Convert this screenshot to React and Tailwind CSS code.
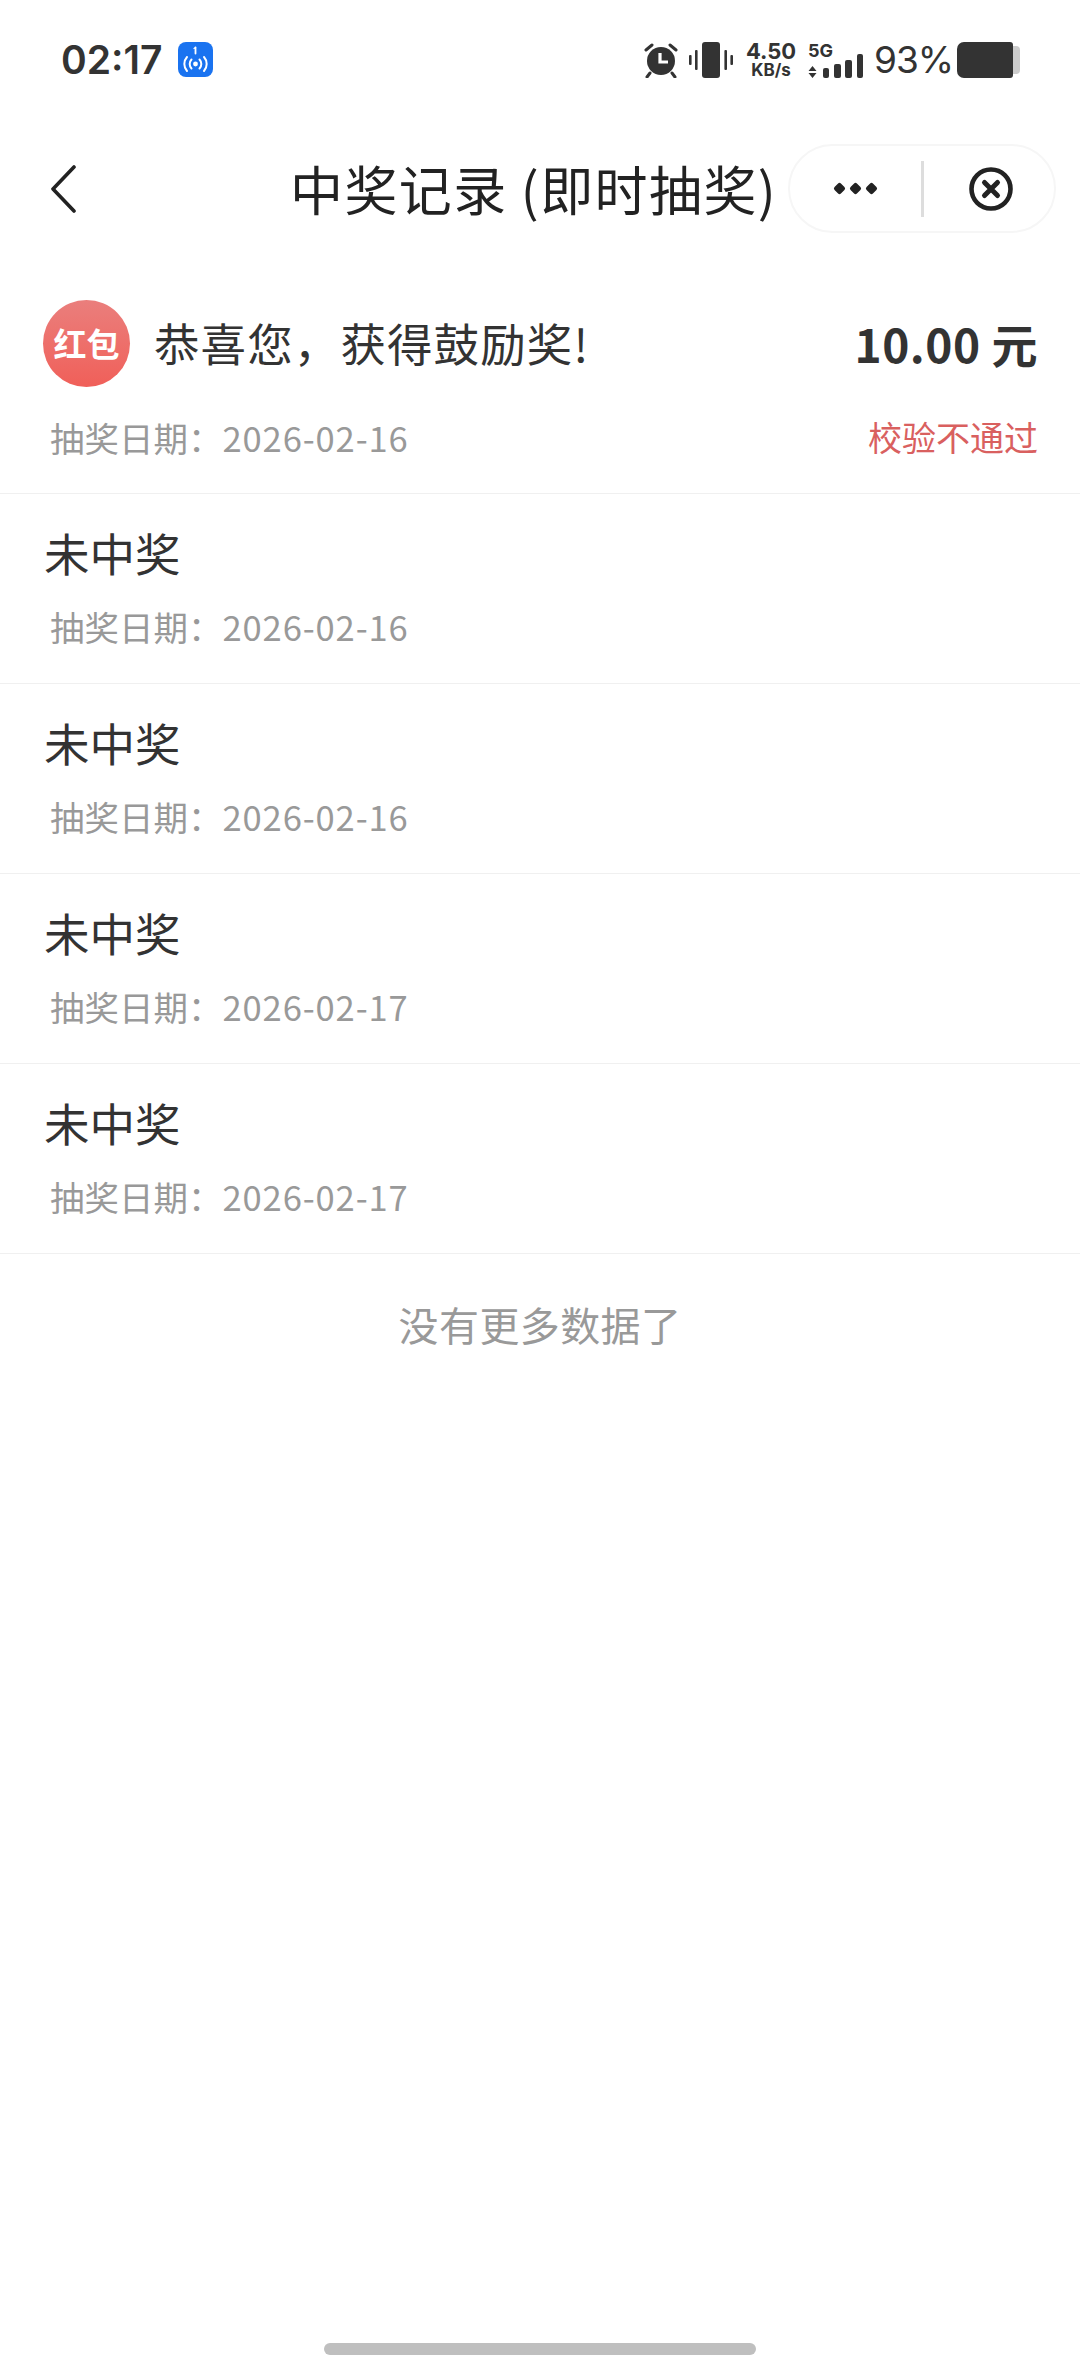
import React from "react";

const records = [
  { date: "2026-02-16" },
  { date: "2026-02-16" },
  { date: "2026-02-17" },
  { date: "2026-02-17" },
];

const cjk = "font-['Noto_Sans_CJK_SC','Noto_Sans',sans-serif]";

const HotspotBadge = () => (
  <div className="w-[35px] h-[35px] ml-[16px] rounded-[8px] bg-[#1a73f0] flex items-center justify-center">
    <svg width="35" height="35" viewBox="0 0 35 35" fill="none" stroke="#fff" strokeWidth="2" strokeLinecap="round">
      <path d="M17.5 5.5v6" strokeWidth="1.8" />
      <path d="M16 6.5l1.5-1" strokeWidth="1.2" />
      <circle cx="17.5" cy="22" r="2.4" fill="#fff" stroke="none" />
      <path d="M13.5 17.5a6.5 6.5 0 0 0 0 9" />
      <path d="M21.5 17.5a6.5 6.5 0 0 1 0 9" />
      <path d="M9 15a10.5 10.5 0 0 0 0 14" />
      <path d="M26 15a10.5 10.5 0 0 1 0 14" />
    </svg>
  </div>
);

const AlarmIcon = () => (
  <svg width="36" height="36" viewBox="0 0 36 36" fill="none">
    <circle cx="18" cy="19" r="14" fill="#333" />
    <path d="M3 8l6-5M33 8l-6-5M7 31l-3 4M29 31l3 4" stroke="#333" strokeWidth="3" strokeLinecap="round" />
    <path d="M17 11v9h8" stroke="#fff" strokeWidth="3.2" fill="none" />
  </svg>
);

const VibrateIcon = () => (
  <svg width="44" height="36" viewBox="0 0 44 36" fill="#333">
    <rect x="13" y="0" width="18" height="36" rx="3" />
    <rect x="0" y="13" width="2.6" height="10" rx="1" />
    <rect x="6" y="8" width="2.6" height="20" rx="1" />
    <rect x="35.4" y="8" width="2.6" height="20" rx="1" />
    <rect x="41.4" y="13" width="2.6" height="10" rx="1" />
  </svg>
);

const SignalIcon = () => (
  <svg width="55" height="36" viewBox="0 0 55 36" fill="#333">
    <path d="M4.5 12l4 5H.5zM4.5 24l-4-5h8z" />
    <rect x="15" y="14" width="6" height="10" rx="2" />
    <rect x="26" y="10" width="7" height="14" rx="2" />
    <rect x="37" y="6" width="7" height="18" rx="2" />
    <rect x="49" y="0" width="6" height="24" rx="2" />
  </svg>
);

const StatusBar = () => (
  <div className="h-[120px] pl-[61px] pr-[60px] pt-[42px] flex justify-between items-start text-[#333]">
    <div className="flex items-center h-[35px]">
      <span className="font-['Inter',sans-serif] font-semibold text-[39px] leading-none">02:17</span>
      <HotspotBadge />
    </div>
    <div className="flex items-start h-[36px]">
      <AlarmIcon />
      <div className="ml-[10px]"><VibrateIcon /></div>
      <div className="ml-[15px] w-[46px] flex flex-col items-center font-['Inter',sans-serif] font-bold leading-none">
        <span className="text-[22px] leading-[18px]">4.50</span>
        <span className="text-[17px] leading-[18px] mt-[1px]">KB/s</span>
      </div>
      <div className="ml-[14px] w-[55px] relative h-[36px]">
        <span className="absolute left-0 top-[1px] font-['Inter',sans-serif] font-bold text-[18px] leading-[15px]">5G</span>
        <div className="absolute left-0 top-[12px]"><SignalIcon /></div>
      </div>
      <span className="ml-[11px] w-[74px] font-['Inter',sans-serif] text-[37px] leading-[36px] tracking-[-1px] whitespace-nowrap">93%</span>
      <div className="ml-[9px] flex items-center h-[36px]">
        <div className="w-[56px] h-[36px] bg-[#333] rounded-l-[7px] rounded-r-[3px]" />
        <div className="w-[7px] h-[28px] bg-[#ccc] rounded-r-[4px]" />
      </div>
    </div>
  </div>
);

const NavBar = () => (
  <div className="h-[89px] mt-[24px] pl-[50px] pr-[24px] flex items-center text-[#222]">
    <svg width="26" height="48" viewBox="0 0 26 48" fill="none" stroke="#222" strokeWidth="3.6" strokeLinecap="round" strokeLinejoin="round">
      <path d="M24 2L3 24l21 22" />
    </svg>
    <h1 className={`${cjk} ml-[214px] w-[496px] text-[53px] leading-none font-normal whitespace-nowrap tracking-[1.4px]`}>
      中奖记录&nbsp;(即时抽奖)
    </h1>
    <div className="ml-auto w-[268px] h-[89px] rounded-full border-2 border-[#f6f6f6] flex items-center">
      <div className="flex-1 flex justify-center gap-[7px]">
        {[0, 1, 2].map((i) => (
          <span key={i} className="w-[9px] h-[9px] bg-[#222] rotate-45 rounded-[2px]" />
        ))}
      </div>
      <div className="w-[3px] h-[56px] bg-[#ddd]" />
      <div className="flex-1 flex justify-center">
        <svg className="ml-[4px]" width="44" height="44" viewBox="0 0 44 44" fill="none" stroke="#222">
          <circle cx="22" cy="22" r="19.5" strokeWidth="4.6" />
          <path d="M15.5 15.5l13 13M28.5 15.5l-13 13" strokeWidth="5" strokeLinecap="round" />
        </svg>
      </div>
    </div>
  </div>
);

const DateLine = ({ date }) => (
  <span className={`${cjk} text-[34.5px] leading-[40px] text-[#999] ml-[6px] whitespace-nowrap`}>
    抽奖日期：<span className="tracking-[0.9px]">{date}</span>
  </span>
);

const App = () => {
  return (
    <div className={`${cjk} w-[1080px] h-[2376px] bg-white flex flex-col`}>
      <StatusBar />
      <NavBar />

      {/* won record */}
      <div className="h-[261px] pt-[67px] border-b border-[#f0f0f0] flex flex-col">
        <div className="flex items-center pl-[43px] pr-[42px]">
          <div className="w-[87px] h-[87px] rounded-full bg-gradient-to-b from-[#ea7e7c] to-[#f05f59] flex items-center justify-center shrink-0">
            <span className="text-white font-bold text-[33px] leading-none">红包</span>
          </div>
          <span className="ml-[24px] mb-[2px] text-[45.5px] leading-none text-[#333] whitespace-nowrap tracking-[1.1px]">恭喜您，获得鼓励奖!</span>
          <span className="ml-auto mb-[2px] text-[46px] leading-none font-semibold text-[#333] whitespace-nowrap tracking-[0.5px]">10.00 元</span>
        </div>
        <div className="mt-[30px] flex items-center justify-between pl-[44px] pr-[42px]">
          <DateLine date="2026-02-16" />
          <span className="text-[34px] leading-[40px] text-[#d9605f]">校验不通过</span>
        </div>
      </div>

      {records.map((item, index) => (
        <div key={index} className="h-[190px] pl-[44px] pt-[35px] border-b border-[#f0f0f0] flex flex-col items-start">
          <span className="text-[45.5px] leading-[46px] text-[#333]">未中奖</span>
          <div className="mt-[31px]"><DateLine date={item.date} /></div>
        </div>
      ))}

      <p className="mt-[46px] text-center text-[40px] leading-[48px] text-[#999] tracking-[0.4px]">没有更多数据了</p>

      <div className="mt-auto mb-[21px] mx-auto w-[432px] h-[12px] rounded-full bg-[#bfbfbf]" />
    </div>
  );
};

export default App;
